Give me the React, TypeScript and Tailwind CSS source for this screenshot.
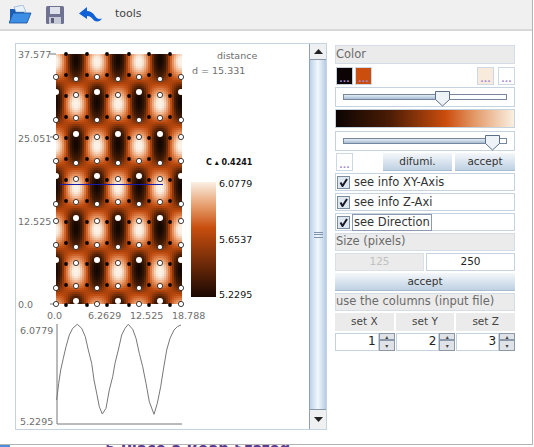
import { ReactNode } from "react"

const font = "font-['DejaVu_Sans',sans-serif]"

// plot box in page pixels, the svg starts at the panel's inner corner (16,44)
const ox = 16
const oy = 44

function colormap(t: number) {
  const stops: [number, number, number, number][] = [
    [0, 14, 4, 2],
    [0.25, 70, 28, 5],
    [0.5, 190, 74, 14],
    [0.72, 232, 150, 100],
    [0.95, 250, 238, 224],
    [1, 251, 242, 232],
  ]
  for (let i = 1; i < stops.length; i++) {
    if (t <= stops[i][0]) {
      const a = stops[i - 1]
      const b = stops[i]
      const k = (t - a[0]) / (b[0] - a[0])
      return `rgb(${Math.round(a[1] + (b[1] - a[1]) * k)},${Math.round(a[2] + (b[2] - a[2]) * k)},${Math.round(a[3] + (b[3] - a[3]) * k)})`
    }
  }
  return "rgb(251,242,232)"
}

function blob(x: number, y: number, sx: number, sy: number) {
  return Math.exp(-(x * x) / (2 * sx * sx) - (y * y) / (2 * sy * sy))
}

// wraps a distance into one lattice cell
function wrap(d: number, p: number) {
  return d - p * Math.round(d / p)
}

function field(x: number, y: number) {
  const bright =
    blob(wrap(x - 97, 42), wrap(y - 62, 84), 8, 12) + blob(wrap(x - 76, 42), wrap(y - 104, 84), 8, 12)
  const dark =
    blob(wrap(x - 76, 42), wrap(y - 60, 84), 6.5, 14) + blob(wrap(x - 97, 42), wrap(y - 102, 84), 6.5, 14)
  return Math.min(1, Math.max(0, 0.44 + 0.56 * bright - 0.44 * dark))
}

function heatCells() {
  const cells = []
  for (let y = 54; y < 304; y += 2) {
    for (let x = 56; x < 182; x += 2) {
      cells.push(<rect key={`${x}-${y}`} x={x} y={y} width={2} height={2} fill={colormap(field(x + 1, y + 1))} />)
    }
  }
  return cells
}

const evenX = [56, 97, 139, 181]
const oddX = [76, 118, 160]
const blackX = [66, 87, 107, 129, 149, 170]

function Dot({ x, y, kind }: { x: number; y: number; kind: "black" | "hollow" | "white" }) {
  if (kind === "black") return <circle cx={x} cy={y} r={1.9} fill="#0a0505" />
  if (kind === "hollow") return <circle cx={x} cy={y} r={2.6} fill="#fff" stroke="#111" strokeWidth={0.8} />
  return <circle cx={x} cy={y} r={3} fill="#fff" />
}

function dots() {
  const out: ReactNode[] = []
  blackX.forEach((x) => out.push(<Dot key={`t${x}`} x={x} y={54} kind="black" />))
  const groupA = [76, 118, 160, 202, 244, 286]
  groupA.forEach((g, i) => {
    const flip = i % 2 === 1
    evenX.forEach((x) => out.push(<Dot key={`a${g}${x}`} x={x} y={flip ? g + 2 : g + 1} kind="hollow" />))
    oddX.forEach((x) => out.push(<Dot key={`b${g}${x}`} x={x} y={flip ? g : g + 3} kind="hollow" />))
    blackX.forEach((x) => out.push(<Dot key={`c${g}${x}`} x={x} y={g - 1} kind="black" />))
  })
  const groupB = [95, 137, 179, 221, 263, 304]
  groupB.forEach((g, i) => {
    const flip = i % 2 === 1
    evenX.forEach((x) => out.push(<Dot key={`d${g}${x}`} x={x} y={flip ? g : g - 3} kind={flip ? "hollow" : "white"} />))
    oddX.forEach((x) => out.push(<Dot key={`e${g}${x}`} x={x} y={flip ? g - 3 : g} kind={flip ? "white" : "hollow"} />))
    blackX.forEach((x) => out.push(<Dot key={`f${g}${x}`} x={x} y={g + 1} kind="black" />))
  })
  return out
}

const curve = [
  [170, 360], [176, 310], [182, 270], [190, 235], [198, 200], [208, 165], [218, 145], [232, 133], [245, 145],
  [256, 170], [265, 210], [275, 250], [282, 300], [290, 340], [298, 380], [307, 402], [318, 385], [328, 330],
  [338, 290], [345, 250], [355, 210], [365, 165], [375, 145], [385, 133], [398, 148], [408, 175], [418, 220],
  [428, 260], [438, 310], [448, 365], [462, 403], [472, 370], [482, 320], [490, 270], [500, 210], [510, 175],
  [522, 150], [532, 140], [543, 135],
]
  .map(([x, y]) => `${(x / 3).toFixed(1)},${(280 + y / 3).toFixed(1)}`)
  .join(" ")

function Label({ x, y, children, dark }: { x: number; y: number; children: string; dark?: boolean }) {
  return (
    <text x={x} y={y} fontSize={9.5} fill={dark ? "#111" : "#6e6e6e"} fontFamily="DejaVu Sans, sans-serif">
      {children}
    </text>
  )
}

function Plot() {
  return (
    <svg width={293} height={385} viewBox={`${ox} ${oy} 293 385`} className="block shrink-0">
      <defs>
        <linearGradient id="bar" x1="0" y1="1" x2="0" y2="0">
          <stop offset="0" stopColor="#1a0802" />
          <stop offset="0.6" stopColor="#c84e0e" />
          <stop offset="0.8" stopColor="#e8a070" />
          <stop offset="1" stopColor="#faf0e4" />
        </linearGradient>
      </defs>
      <g shapeRendering="crispEdges">{heatCells()}</g>
      <line x1={50} x2={56} y1={54} y2={54} stroke="#777" />
      <line x1={50} x2={56} y1={137} y2={137} stroke="#777" />
      <line x1={50} x2={56} y1={304} y2={304} stroke="#777" />
      {dots()}
      <line x1={60} x2={163} y1={184.5} y2={184.5} stroke="#1a1aa8" strokeWidth={1.2} />
      <Label x={18} y={58}>37.577</Label>
      <Label x={18} y={142}>25.051</Label>
      <Label x={18} y={225}>12.525</Label>
      <Label x={18} y={308}>0.0</Label>
      <Label x={47} y={319}>0.0</Label>
      <Label x={88} y={319}>6.2629</Label>
      <Label x={130} y={319}>12.525</Label>
      <Label x={172} y={319}>18.788</Label>
      <Label x={217} y={59}>distance</Label>
      <Label x={192} y={74}>d = 15.331</Label>
      <text x={206} y={165} fontSize={8} fontWeight={700} fill="#111" fontFamily="DejaVu Sans, sans-serif">C ▴ 0.4241</text>
      <rect x={191} y={182} width={25} height={115} fill="url(#bar)" />
      <Label x={219} y={187} dark>6.0779</Label>
      <Label x={219} y={243} dark>5.6537</Label>
      <Label x={219} y={298} dark>5.2295</Label>
      <Label x={20} y={334}>6.0779</Label>
      <Label x={20} y={425}>5.2295</Label>
      <polyline points={`57,324 57,424 182,424`} fill="none" stroke="#777" strokeWidth={1} />
      <polyline points={curve} fill="none" stroke="#777" strokeWidth={1} />
    </svg>
  )
}

function Scrollbar() {
  return (
    <div className="w-[17px] flex flex-col border-l border-[#8fa0b5] bg-[linear-gradient(90deg,#bcd2ea,#f2f7fc_50%,#b4cbe4)]">
      <div className="h-[16px] bg-[#eef0f2] border-b border-[#8a98a8] flex items-center justify-center">
        <svg width="9" height="5"><path d="M4.5 0 9 5H0z" fill="#222" /></svg>
      </div>
      <div className="flex-1 flex items-center justify-center">
        <div className="w-[9px] h-[6px] flex flex-col justify-between">
          <div className="h-px bg-[#7f93ab]" />
          <div className="h-px bg-[#7f93ab]" />
          <div className="h-px bg-[#7f93ab]" />
        </div>
      </div>
      <div className="h-[20px] bg-[#eef0f2] border-t border-[#8a98a8] flex items-center justify-center">
        <svg width="9" height="5"><path d="M0 0H9L4.5 5z" fill="#222" /></svg>
      </div>
    </div>
  )
}

function Swatch({ color, dark }: { color: string; dark?: boolean }) {
  return (
    <div className={`w-[17px] h-[18px] flex items-end justify-center border ${dark ? "border-[#c4d0dc]" : "border-[#ccd8e4]"} text-[9px] leading-[10px] font-bold text-[#a58ad8] ${color}`}>
      ...
    </div>
  )
}

function Slider({ pos, fill }: { pos: string; fill: string }) {
  return (
    <div className="h-[20px] border border-[#c5d3e0] bg-white px-[7px] flex items-center">
      <div className="relative w-full h-[6px] border border-[#76879b] bg-white">
        <div className={`h-full bg-[linear-gradient(180deg,#e3ecf5,#a8bdd4)] ${fill}`} />
        <svg width="15" height="16" className={`absolute top-[-4px] ${pos}`}>
          <path d="M.5.5h14v8l-7 6.500-7-6.500z" fill="#eef3f8" stroke="#5d6f85" />
        </svg>
      </div>
    </div>
  )
}

function Btn({ children, className }: { children: string; className: string }) {
  return (
    <div className={`h-[18px] flex items-center justify-center text-[#333] bg-[linear-gradient(180deg,#f4f7fa,#bfd1e3)] border-b border-[#a9bbce] ${className}`}>
      {children}
    </div>
  )
}

function Header({ children, tall }: { children: string; tall?: boolean }) {
  return (
    <div className={`${tall ? "h-[19px]" : "h-[18px]"} flex items-center bg-[#ebebeb] border border-[#d4dde6] text-[#6a6a6a] text-[11.5px] leading-none`}>
      {children}
    </div>
  )
}

function Check({ children, focus }: { children: string; focus?: boolean }) {
  return (
    <div className="h-[18px] border border-[#c5d3e0] bg-white flex items-center text-[#333] text-[11.5px]">
      <div className="ml-[1px] w-[13px] h-[13px] bg-[#dfe7ef] border border-[#7b8ba0] flex items-center justify-center">
        <svg width="9" height="9"><path d="M1.500 4.500 3.500 8 8 1" fill="none" stroke="#1a1a2a" strokeWidth="2" /></svg>
      </div>
      <span className={`pl-px pr-px leading-[15px] ${focus ? "ml-[2px] border border-[#8a9ab0]" : "ml-[3px]"}`}>{children}</span>
    </div>
  )
}

function Spin({ value, className }: { value: string; className: string }) {
  return (
    <div className={`h-[18px] flex ${className}`}>
      <div className="flex-1 border border-[#c5d3e0] bg-white text-right pr-[2px] leading-[15px] text-[#222] text-[12px]">{value}</div>
      <div className="w-[16px] flex flex-col border border-[#8a98a8] bg-[#dfe2e6]">
        <div className="h-[7px] flex items-center justify-center border-b-2 border-[#8a98a8] text-[6px] leading-none text-[#444]">▴</div>
        <div className="flex-1 flex items-center justify-center text-[6px] leading-none text-[#444]">▾</div>
      </div>
    </div>
  )
}

function ControlPanel() {
  return (
    <div className={`w-[180px] ml-[8px] mt-[2px] flex flex-col text-[10.5px] ${font}`}>
      <Header tall>Color</Header>
      <div className="mt-[3px] flex items-center pl-px">
        <Swatch color="bg-[#0c0404]" dark />
        <div className="w-[2px]" />
        <Swatch color="bg-[#cc4e0e]" />
        <div className="flex-1" />
        <Swatch color="bg-[#f9ebdc]" />
        <div className="w-[4px]" />
        <Swatch color="bg-white" />
      </div>
      <div className="mt-[2px]"><Slider pos="left-[91px]" fill="w-[57%]" /></div>
      <div className="mt-[2px] h-[19px] border border-[#c5d3e0] bg-[linear-gradient(90deg,#0c0403,#4a1c05_30%,#cc4e0e_62%,#e39a68_78%,#faf0e2)]" />
      <div className="mt-[3px]"><Slider pos="left-[141px]" fill="w-[90%]" /></div>
      <div className="mt-[2px] flex items-center">
        <div className="ml-px w-[17px] h-[18px] border border-[#ccd8e4] flex items-end justify-center text-[9px] leading-[10px] font-bold text-[#a58ad8]">...</div>
        <Btn className="ml-[30px] w-[69px]">difumi.</Btn>
        <Btn className="ml-[3px] flex-1">accept</Btn>
      </div>
      <div className="mt-[2px] flex flex-col gap-[2px]">
        <Check>see info XY-Axis</Check>
        <Check>see info Z-Axi</Check>
        <Check focus>see Direction</Check>
      </div>
      <div className="mt-[2px] flex flex-col gap-[2px]">
        <Header>Size (pixels)</Header>
        <div className="flex gap-[2px]">
          <div className="flex-1 h-[18px] bg-[#ebebeb] border border-[#d9e0e7] flex items-center justify-center text-[#c0c0c0]">125</div>
          <div className="flex-1 h-[18px] bg-white border border-[#c5d3e0] flex items-center justify-center text-[#222]">250</div>
        </div>
        <Btn className="w-full">accept</Btn>
        <Header>use the columns (input file)</Header>
        <div className="flex gap-[2px]">
          <div className="flex-1 h-[18px] bg-[#ebebeb] flex items-center justify-center text-[#444]">set X</div>
          <div className="flex-1 h-[18px] bg-[#ebebeb] flex items-center justify-center text-[#444]">set Y</div>
          <div className="flex-1 h-[18px] bg-[#ebebeb] flex items-center justify-center text-[#444]">set Z</div>
        </div>
        <div className="flex gap-[1px]">
          <Spin value="1" className="w-[60px]" />
          <Spin value="2" className="w-[60px]" />
          <Spin value="3" className="w-[59px]" />
        </div>
      </div>
    </div>
  )
}

function Toolbar() {
  return (
    <div className="h-[31px] shrink-0 flex items-center bg-[#f0f0f0] border-b-2 border-[#d8d8d8] pl-[9px]">
      <svg width="23" height="19" viewBox="0 0 23 19">
        <path d="M1 4h7l2 2h5v11H1z" fill="#1c5fb4" />
        <path d="M5 2 14 0l3 7H7z" fill="#e8f0f8" stroke="#7fa5cc" strokeWidth=".6" />
        <path d="M4 8h18l-4 10H0z" fill="#3d8fe6" stroke="#154f9c" strokeWidth=".8" />
      </svg>
      <svg width="18" height="18" viewBox="0 0 18 18" className="ml-[14px]">
        <rect width="18" height="18" rx="1.500" fill="#6f7290" />
        <rect x="4" y="1" width="10" height="7" fill="#dfe1ea" />
        <rect x="3" y="11" width="12" height="7" fill="#c7c9d6" />
        <rect x="5" y="12" width="3" height="5" fill="#5b5e78" />
      </svg>
      <svg width="23" height="16" viewBox="0 0 23 16" className="ml-[15px]">
        <path d="M8 0 0 6.500 8 12V9c3 0 5 2 7 4.500 3 2 6 1 8-2-3 1-5 .500-7-2.500C14 5.500 11 4 8 4z" fill="#0f62d6" />
      </svg>
      <span className={`ml-[13px] text-[11px] text-[#444] ${font}`}>tools</span>
    </div>
  )
}

export default function App() {
  return (
    <div className="w-[534px] h-[447px] overflow-hidden bg-white">
      <div className="h-[445px] w-[533px] flex flex-col bg-white border-r border-b border-[#b4b4b4]">
        <Toolbar />
        <div className="flex pl-[15px] pt-[12px]">
          <div className="w-[312px] h-[387px] flex border border-[#c5d3e0] bg-white">
            <Plot />
            <Scrollbar />
          </div>
          <ControlPanel />
        </div>
      </div>
      <div className="h-[2px] flex overflow-hidden">
        <div className="w-[10px] bg-[#4a90d8]" />
        <div className={`ml-[95px] -mt-[3px] text-[15px] leading-[15px] text-[#5a3a90] font-bold whitespace-nowrap ${font}`}>
          5 Place a Bean Stated
        </div>
      </div>
    </div>
  )
}
